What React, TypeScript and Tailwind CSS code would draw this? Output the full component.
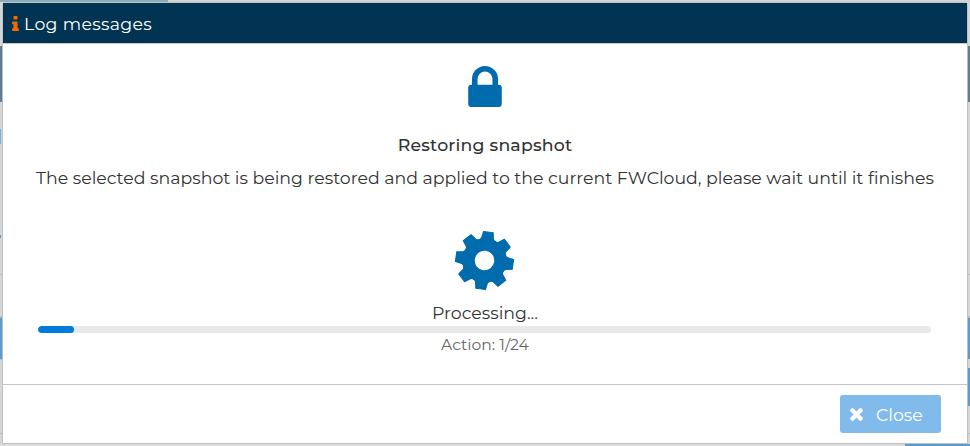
const LOCK =
  'M640 768h512v-192q0-106-75-181t-181-75-181 75-75 181v192zm832 96v576q0 40-28 68t-68 28h-960q-40 0-68-28t-28-68v-576q0-40 28-68t68-28h32v-192q0-184 132-316t316-132 316 132 132 316v192h32q40 0 68 28t28 68z';
const TIMES =
  'M1490 1322q0 40-28 68l-136 136q-28 28-68 28t-68-28l-294-294-294 294q-28 28-68 28t-68-28l-136-136q-28-28-28-68t28-68l294-294-294-294q-28-28-28-68t28-68l136-136q28-28 68-28t68 28l294 294 294-294q28-28 68-28t68 28l136 136q28 28 28 68t-28 68l-294 294 294 294q28 28 28 68z';
const INFO =
  'M1216 1344v128q0 26-19 45t-45 19h-512q-26 0-45-19t-19-45v-128q0-26 19-45t45-19h64v-384h-64q-26 0-45-19t-19-45v-128q0-26 19-45t45-19h384q26 0 45 19t19 45v576h64q26 0 45 19t19 45zm-128-1152v192q0 26-19 45t-45 19h-256q-26 0-45-19t-19-45v-192q0-26 19-45t45-19h256q26 0 45 19t19 45z';

function Icon({ d, box, className }: { d: string; box: string; className: string }) {
  return (
    <svg viewBox={box} className={`shrink-0 fill-current ${className}`} aria-hidden="true">
      <path d={d} />
    </svg>
  );
}

// Eight-toothed gear: a ring with one tooth repeated every 45 degrees.
function Gear({ className }: { className: string }) {
  return (
    <svg viewBox="-31 -31 62 62" className={`shrink-0 ${className}`} aria-hidden="true">
      <circle r="16.3" fill="none" stroke="currentColor" strokeWidth="12.8" />
      {[0, 45, 90, 135, 180, 225, 270, 315].map((angle) => (
        <path
          key={angle}
          d="M-7.4 -20L-6 -22.6L-4.9 -29.1H4.9L6 -22.6L7.4 -20Z"
          transform={`rotate(${angle})`}
          fill="currentColor"
          stroke="currentColor"
          strokeWidth="1.2"
          strokeLinejoin="round"
        />
      ))}
    </svg>
  );
}

// Edges of the dimmed page that stay visible on both sides of the dialog.
function LeftEdge() {
  return (
    <div className="flex flex-col bg-[#d6d6d6]">
      <div className="mt-[44px] h-14 bg-[#5f7f8e]" />
      <div className="mt-[27px] h-[15px] w-px bg-[#6fb0d8]" />
      <div className="mt-[91px] h-[3px] w-px bg-[#5b9bca]" />
      <div className="mt-[36px] h-px bg-[#bdbdbd]" />
      <div className="mt-[41px] h-[2px] bg-[#bdbdbd]" />
      <div className="h-[41px] bg-[#5b9bca]" />
      <div className="h-px bg-[#bdbdbd]" />
      <div className="mt-[73px] h-px bg-[#bdbdbd]" />
    </div>
  );
}

function RightEdge() {
  return (
    <div className="flex flex-col bg-[#d6d6d6]">
      <div className="mt-[44px] h-14 bg-[#5f7f8e]" />
      <div className="mt-[172px] h-px bg-[#bdbdbd]" />
      <div className="mt-[41px] h-[2px] bg-[#bdbdbd]" />
      <div className="h-[41px] bg-[#5b9bca]" />
      <div className="mt-[9px] h-[38px] bg-[#5b9bca]" />
      <div className="mt-[27px] h-px bg-[#bdbdbd]" />
    </div>
  );
}

export default function App() {
  return (
    <div className="flex h-[446px] w-[970px] flex-col overflow-hidden bg-[#d2d2d2] font-['Montserrat','Inter',sans-serif] text-[17.33px] text-[#333]">
      <div className="h-[2px] shrink-0">
        <div className="h-full w-[168px] bg-[#8dabba]" />
      </div>
      <div className="grid h-[442px] shrink-0 grid-cols-[2px_966px_2px]">
        <LeftEdge />
        <section className="flex flex-col rounded-t-[3px] border border-[#c0c0c2] bg-white">
          <header className="flex h-[41px] shrink-0 items-center border-b border-[#c8c8d4] bg-[#003452] pl-[9px] text-white">
            <Icon d={INFO} box="576 128 640 1408" className="h-[15px] w-[7px] text-[#f26a00]" />
            <h1 className="ml-[5px] pt-px leading-5 tracking-[0.33px]">Log messages</h1>
          </header>
          <main className="flex h-[340px] shrink-0 flex-col items-center">
            <Icon d={LOCK} box="320 128 1152 1408" className="mt-[22px] mr-px h-[41px] w-[34px] text-[#006cad]" />
            <h2 className="mt-[28px] whitespace-nowrap leading-5 font-medium tracking-[0.19px]">Restoring snapshot</h2>
            <p className="mt-[13px] whitespace-nowrap leading-5">
              The selected snapshot is being restored and applied to the current FWCloud, please wait until it finishes
            </p>
            <Gear className="mt-[42px] mr-px size-[61px] rotate-[7.8deg] text-[#006cad]" />
            <p className="mt-[12px] leading-5">Processing...</p>
            <div className="mt-[3px] mr-[2px] h-[7px] w-[893px] overflow-hidden rounded-full bg-[#e9e9e9]">
              <div className="h-full w-9 rounded-full bg-[#007bdc]" />
            </div>
            <p className="mt-[2px] text-[15.6px] leading-5 text-[#666]">Action: 1/24</p>
          </main>
          <footer className="flex h-[59px] items-center justify-end border-t border-[#c4c4c4] pr-[26px]">
            <button className="flex h-[38px] w-[101px] items-center rounded-[3px] bg-[#80bbeb] pl-[10px] text-white">
              <Icon d={TIMES} box="302 366 1188 1188" className="size-[13px]" />
              <span className="ml-[13px] pt-px leading-5">Close</span>
            </button>
          </footer>
        </section>
        <RightEdge />
      </div>
      <div className="flex h-[2px] shrink-0 justify-end bg-[#dcdcdc]">
        <div className="w-[65px] bg-[#5b9bca]" />
      </div>
    </div>
  );
}
